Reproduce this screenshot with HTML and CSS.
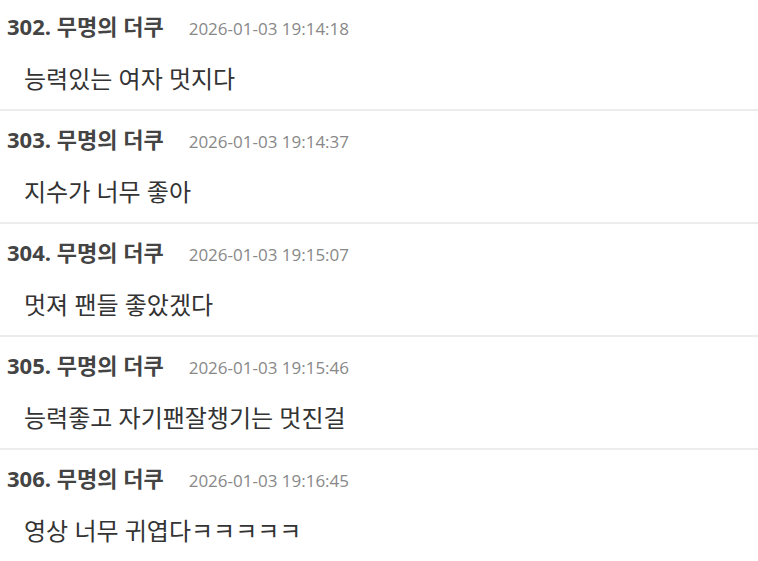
FILE: index.html
```html
<!DOCTYPE html>
<html lang="ko">
<head>
    <meta charset="UTF-8">
    <title>댓글</title>
    <link rel="stylesheet" href="styles.css">
</head>
<body>
    <div class="comments">
        <div class="comment">
            <div class="comment-head">
                <span class="author">302. 무명의 더쿠</span>
                <span class="date">2026-01-03 19:14:18</span>
            </div>
            <p class="comment-body">능력있는 여자 멋지다</p>
        </div>
        <div class="comment">
            <div class="comment-head">
                <span class="author">303. 무명의 더쿠</span>
                <span class="date">2026-01-03 19:14:37</span>
            </div>
            <p class="comment-body">지수가 너무 좋아</p>
        </div>
        <div class="comment">
            <div class="comment-head">
                <span class="author">304. 무명의 더쿠</span>
                <span class="date">2026-01-03 19:15:07</span>
            </div>
            <p class="comment-body">멋져 팬들 좋았겠다</p>
        </div>
        <div class="comment">
            <div class="comment-head">
                <span class="author">305. 무명의 더쿠</span>
                <span class="date">2026-01-03 19:15:46</span>
            </div>
            <p class="comment-body">능력좋고 자기팬잘챙기는 멋진걸</p>
        </div>
        <div class="comment">
            <div class="comment-head">
                <span class="author">306. 무명의 더쿠</span>
                <span class="date">2026-01-03 19:16:45</span>
            </div>
            <p class="comment-body">영상 너무 귀엽다ㅋㅋㅋㅋㅋ</p>
        </div>
    </div>
</body>
</html>
```

FILE: styles.css
```css
body {
    margin: 0;
    background-color: #fff;
    font-family: "Open Sans", "Noto Sans CJK KR", sans-serif;
}

.comments {
    margin-top: -2px;
}

.comment {
    height: 113px;
    box-sizing: border-box;
    border-bottom: 2px solid #ececec;
    padding: 15px 0 0 7px;
}

.comment-head {
    display: flex;
    align-items: baseline;
    gap: 25px;
    line-height: 26px;
}

.author {
    font-size: 22px;
    font-weight: bold;
    color: #444;
}

.date {
    font-size: 17px;
    color: #888;
}

.comment-body {
    margin: 21px 0 0 17px;
    font-size: 24px;
    line-height: 32px;
    color: #333;
}
```
